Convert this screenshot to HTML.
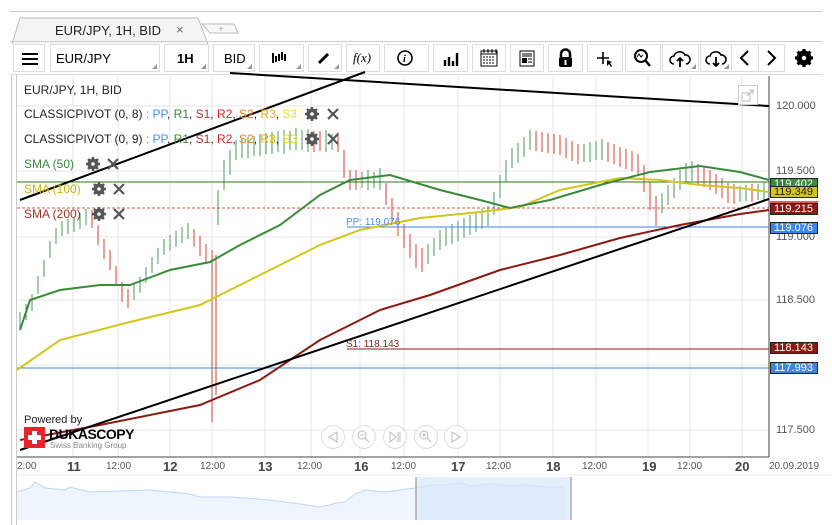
<!DOCTYPE html>
<html><head><meta charset="utf-8">
<style>
*{margin:0;padding:0;box-sizing:border-box}
body{width:832px;height:525px;background:#fff;font-family:"Liberation Sans",Arial,sans-serif;overflow:hidden;position:relative}
.abs{position:absolute}
.btn{position:absolute;top:44px;height:28px;border:1px solid #ddd;background:#fff;font-size:13px;color:#000}
.tri{position:absolute;right:2px;bottom:2px;width:0;height:0;border-left:5px solid transparent;border-bottom:5px solid #999}
.lbl{position:absolute;left:770px;width:48px;height:12px;font-size:11px;line-height:11px;color:#fff;padding-left:3px;border:1px solid #222}
.leg{position:absolute;left:24px;font-size:12px;color:#222}
.pa{position:absolute;left:776px;font-size:11px;color:#555}
.ta{position:absolute;top:461px;font-size:10px;color:#555}
.td{position:absolute;top:459px;font-size:13px;font-weight:bold;color:#444}
</style></head><body>
<div class="abs" style="left:10px;top:11px;width:812px;height:1px;background:#ccc"></div>
<svg class="abs" style="left:10px;top:16px" width="230" height="28">
<path d="M2 28 L10 2 L188 2 L198 28" fill="#f4f4f4" stroke="#bbb"/>
<path d="M192 8 L224 8 L228 17 L200 17 Z" fill="#f8f8f8" stroke="#bbb"/>
<text x="208" y="16" font-size="10" fill="#aaa" font-family="Liberation Sans">+</text>
</svg>
<div class="abs" style="left:55px;top:23px;font-size:13px;color:#222">EUR/JPY, 1H, BID</div>
<div class="abs" style="left:176px;top:22px;font-size:13px;color:#666">×</div>
<div class="abs" style="left:10px;top:41px;width:812px;height:1px;background:#ccc"></div>
<div class="btn" style="left:13px;width:32px"><div style="position:absolute;left:8px;top:8px;width:16px;height:2px;background:#000;box-shadow:0 5px 0 #000,0 10px 0 #000"></div></div>
<div class="btn" style="left:50px;width:110px;padding:6px 5px">EUR/JPY<div class="tri"></div></div>
<div class="btn" style="left:164px;width:45px;padding:6px 12px;font-weight:bold">1H<div class="tri"></div></div>
<div class="btn" style="left:213px;width:42px;padding:6px 10px">BID<div class="tri"></div></div>
<div class="btn" style="left:259px;width:45px"><svg width="40" height="26"><path d="M13 8v10M16 11v6M19 9v7M22 7v8M25 9v7" stroke="#000" stroke-width="2"/></svg><div class="tri"></div></div>
<div class="btn" style="left:308px;width:34px"><svg width="30" height="26"><path d="M10 18 L19 9" stroke="#000" stroke-width="3"/></svg><div class="tri"></div></div>
<div class="btn" style="left:346px;width:34px;font-family:'Liberation Serif';font-style:italic;padding:5px 6px">f(x)</div>
<div class="btn" style="left:384px;width:45px"><svg width="40" height="26"><circle cx="20" cy="13" r="7" fill="none" stroke="#000" stroke-width="1.6"/><text x="18" y="17" font-size="10" font-style="italic" font-weight="bold" font-family="Liberation Serif">i</text></svg></div>
<div class="btn" style="left:433px;width:35px"><svg width="33" height="26"><path d="M11 21v-6M15 21v-9M19 21v-5M23 21v-13" stroke="#000" stroke-width="2.4"/></svg></div>
<div class="btn" style="left:472px;width:34px"><svg width="32" height="26"><rect x="8" y="6" width="16" height="15" fill="none" stroke="#000"/><path d="M8 9h16" stroke="#000"/><path d="M11 4v4M15 4v4M19 4v4M23 4v4" stroke="#000"/><path d="M10 12h12M10 15h12M10 18h12" stroke="#000" stroke-dasharray="2 1"/></svg></div>
<div class="btn" style="left:510px;width:34px"><svg width="32" height="26"><rect x="9" y="6" width="14" height="15" fill="none" stroke="#000"/><path d="M11 9h10M11 11h10" stroke="#000"/><rect x="11" y="13" width="5" height="5"/><path d="M17 14h4M17 17h4" stroke="#000"/></svg></div>
<div class="btn" style="left:548px;width:35px"><svg width="33" height="26"><path d="M12 12v-3a4.5 4.5 0 0 1 9 0v3" fill="none" stroke="#000" stroke-width="2.5"/><rect x="10" y="12" width="13" height="10" rx="2"/><path d="M16.5 15v5" stroke="#fff" stroke-width="2"/></svg></div>
<div class="btn" style="left:587px;width:36px"><svg width="34" height="26"><path d="M15 7v12M9 13h12" stroke="#000" stroke-width="1.6"/><path d="M19 15l5 2-2 1 2 3-1 1-2-3-2 2z"/></svg></div>
<div class="btn" style="left:625px;width:36px"><svg width="34" height="26"><circle cx="15" cy="11" r="6" fill="none" stroke="#000" stroke-width="2"/><path d="M19 15l5 6" stroke="#000" stroke-width="2.4"/><path d="M11 12l2-3 2 3 2-2" fill="none" stroke="#000"/></svg></div>
<div class="btn" style="left:662px;width:37px"><svg width="35" height="26"><path d="M11 19a4 4 0 0 1 0-8a6 6 0 0 1 11-1a4.5 4.5 0 0 1 1 9" fill="none" stroke="#000" stroke-width="1.6"/><path d="M17 22v-8M14 16l3-3 3 3" fill="none" stroke="#000" stroke-width="1.8"/></svg><div class="tri"></div></div>
<div class="btn" style="left:700px;width:32px"><svg width="30" height="26"><path d="M9 19a4 4 0 0 1 0-8a6 6 0 0 1 11-1a4.5 4.5 0 0 1 1 9" fill="none" stroke="#000" stroke-width="1.6"/><path d="M15 12v9M12 18l3 3 3-3" fill="none" stroke="#000" stroke-width="1.8"/></svg><div class="tri"></div></div>
<div class="btn" style="left:731px;width:28px"><svg width="26" height="26"><path d="M16 6l-7 7 7 7" fill="none" stroke="#000" stroke-width="2"/></svg></div>
<div class="btn" style="left:758px;width:27px"><svg width="26" height="26"><path d="M9 6l7 7-7 7" fill="none" stroke="#000" stroke-width="2"/></svg></div>
<svg class="abs" style="left:794px;top:48px" width="20" height="20"><g transform="translate(10,10)"><circle r="5.5" fill="none" stroke="#000" stroke-width="4"/><g stroke="#000" stroke-width="3.2"><path d="M0-9V9M-9 0H9M-6.4-6.4L6.4 6.4M-6.4 6.4L6.4-6.4"/></g><circle r="2.2" fill="#fff"/></g></svg>
<div class="abs" style="left:10px;top:74px;width:812px;height:1px;background:#ddd"></div>
<div class="abs" style="left:11px;top:75px;width:1px;height:450px;background:#ccc"></div>
<div class="abs" style="left:16px;top:75px;width:1px;height:450px;background:#ccc"></div>

<svg class="abs" style="left:0;top:0" width="832" height="525">
<g stroke="#e6e6e6">
<path d="M73 76V457M118 76V457M170 76V457M212 76V457M265 76V457M311 76V457M360 76V457M404 76V457M458 76V457M500 76V457M553 76V457M596 76V457M648 76V457M690 76V457M742 76V457"/>
<path d="M17 106H769M17 171H769M17 237H769M17 300H769M17 365H769M17 430H769"/>
</g>
<line x1="769" y1="76" x2="769" y2="457" stroke="#444"/><line x1="17" y1="457" x2="769" y2="457" stroke="#444"/>
<line x1="17" y1="475" x2="832" y2="475" stroke="#eee"/>
<path stroke="#4a9a5a" fill="none" d="M20 312V328M26 304V320M32 294V311M38 276V294M44 260V277M50 241V258M56 228V244M62 221V236M68 219V234M74 217V232M80 213V229M86 209V225M134 284V300M140 277V293M146 267V283M152 257V273M158 248V264M164 239V255M170 235V251M176 231V247M182 227V243M188 223V239M218 190V225M224 160V190M230 150V175M236 140V160M242 139V158M248 137V158M254 136V156M260 134V156M266 133V154M272 132V154M278 131V152M284 130V154M290 131V150M296 128V150M302 130V150M308 129V152M326 130V152M332 134V150M362 172V188M368 170V190M374 172V188M380 168V190M428 244V264M434 238V256M440 230V250M446 228V246M452 224V244M458 221V241M464 218V238M470 215V235M476 212V232M482 209V229M488 206V226M494 192V215M500 175V198M506 160V182M512 148V168M518 143V163M524 137V157M530 130V150M584 144V162M590 142V162M596 141V160M602 139V160M662 193V213M668 185V205M674 178V198M680 170V190M686 163V183M692 161V181M740 186V202M746 185V201M758 184V200M764 182V200"/>
<path stroke="#d04030" fill="none" d="M92 210V228M98 225V245M104 239V259M110 250V270M116 266V286M122 282V302M128 289V308M194 229V247M200 236V256M206 244V264M212 250V422M216 255V395M314 131V152M320 131V151M338 132V152M344 150V178M350 170V190M356 170V190M386 183V205M392 198V222M398 212V236M404 224V248M410 234V258M416 244V268M422 248V272M536 131V151M542 132V152M548 133V153M554 134V154M560 135V155M566 138V158M572 141V161M578 144V164M608 142V162M614 144V164M620 147V167M626 149V169M632 151V171M638 154V174M644 165V192M650 182V210M656 196V226M698 164V184M704 167V187M710 170V190M716 174V194M722 178V198M728 183V203M734 184V204M752 184V202"/>
<line x1="17" y1="182" x2="769" y2="182" stroke="#2a7a10"/>
<line x1="17" y1="208" x2="769" y2="208" stroke="#e05040" stroke-dasharray="3 2"/>
<line x1="347" y1="227" x2="769" y2="227" stroke="#3b86e6"/>
<line x1="347" y1="349" x2="769" y2="349" stroke="#8b1a10"/>
<line x1="17" y1="368" x2="769" y2="368" stroke="#3b86e6"/>
<polyline fill="none" stroke="#8b1a10" stroke-width="2" points="20,440 100,425 200,405 260,380 320,340 380,310 430,295 500,270 560,255 620,238 680,225 740,214 769,210"/>
<polyline fill="none" stroke="#d4c51e" stroke-width="2" points="17,370 60,340 130,322 200,305 240,285 280,265 320,245 360,230 420,218 480,212 520,207 560,190 620,178 660,180 700,185 740,188 769,192"/>
<polyline fill="none" stroke="#3a8a3a" stroke-width="2" points="20,330 30,300 60,290 100,285 130,285 170,270 210,262 240,245 280,225 320,195 350,180 390,175 440,190 480,200 510,208 550,200 600,185 650,172 700,166 740,172 769,180"/>
<line x1="20" y1="450" x2="769" y2="199" stroke="#000" stroke-width="2"/>
<line x1="20" y1="200" x2="365" y2="72" stroke="#000" stroke-width="2"/>
<line x1="230" y1="73" x2="769" y2="106" stroke="#000" stroke-width="2"/>
<g stroke="#555" stroke-width="2.2" fill="none">
<path d="M328 109l10 10M338 109l-10 10M328 134l10 10M338 134l-10 10M108 159l10 10M118 159l-10 10M114 184l10 10M124 184l-10 10M114 209l10 10M124 209l-10 10"/>
</g>
<g transform="translate(312,114)"><circle r="4" fill="none" stroke="#555" stroke-width="3"/><path d="M0-7V7M-7 0H7M-5-5L5 5M-5 5L5-5" stroke="#555" stroke-width="2.4"/><circle r="1.8" fill="#fff"/></g>
<g transform="translate(312,139)"><circle r="4" fill="none" stroke="#555" stroke-width="3"/><path d="M0-7V7M-7 0H7M-5-5L5 5M-5 5L5-5" stroke="#555" stroke-width="2.4"/><circle r="1.8" fill="#fff"/></g>
<g transform="translate(93,164)"><circle r="4" fill="none" stroke="#555" stroke-width="3"/><path d="M0-7V7M-7 0H7M-5-5L5 5M-5 5L5-5" stroke="#555" stroke-width="2.4"/><circle r="1.8" fill="#fff"/></g>
<g transform="translate(99,189)"><circle r="4" fill="none" stroke="#555" stroke-width="3"/><path d="M0-7V7M-7 0H7M-5-5L5 5M-5 5L5-5" stroke="#555" stroke-width="2.4"/><circle r="1.8" fill="#fff"/></g>
<g transform="translate(99,214)"><circle r="4" fill="none" stroke="#555" stroke-width="3"/><path d="M0-7V7M-7 0H7M-5-5L5 5M-5 5L5-5" stroke="#555" stroke-width="2.4"/><circle r="1.8" fill="#fff"/></g>
<g fill="#fff" fill-opacity="0.7" stroke="#ddd"><circle cx="333" cy="437" r="11.5"/><circle cx="364" cy="437" r="11.5"/><circle cx="395" cy="437" r="11.5"/><circle cx="426" cy="437" r="11.5"/><circle cx="456" cy="437" r="11.5"/></g>
<g fill="none" stroke="#bbb"><path d="M337 432L329 437L337 442Z"/><path d="M452 432L460 437L452 442Z"/><circle cx="362" cy="435" r="4"/><path d="M365 438l4 4M360 435h4"/><circle cx="424" cy="435" r="4"/><path d="M427 438l4 4M422 435h4M424 433v4"/><path d="M390 432L396 437L390 442Z"/><path d="M398 432v10M400 432v10"/></g>
<polygon fill="#eef5fd" points="17,520 17,492 30,488 35,482 45,488 65,490 70,487 90,492 150,490 190,494 200,497 230,497 270,500 300,504 320,507 330,505 335,503 345,502 355,494 365,490 385,492 400,490 415,488 430,485 445,485 460,483 470,486 490,484 510,486 525,485 545,487 565,487 565,520"/>
<polyline fill="none" stroke="#bcd6f6" points="17,492 30,488 35,482 45,488 65,490 70,487 90,492 150,490 190,494 200,497 230,497 270,500 300,504 320,507 330,505 335,503 345,502 355,494 365,490 385,492 400,490 415,488 430,485 445,485 460,483 470,486 490,484 510,486 525,485 545,487 565,487"/>
<rect x="416" y="477" width="155" height="43" fill="#d8e8fb" fill-opacity="0.7"/>
<line x1="416" y1="477" x2="416" y2="520" stroke="#aaa" stroke-width="1.5"/><line x1="571" y1="477" x2="571" y2="520" stroke="#aaa" stroke-width="1.5"/>
</svg>

<div class="leg" style="top:83px">EUR/JPY, 1H, BID</div>
<div class="leg" style="top:107px">CLASSICPIVOT (0, 8) <span style="color:#888">:</span> <span style="color:#4a90e2">PP</span>, <span style="color:#3a8a3a">R1</span>, <span style="color:#b03030">S1</span>, <span style="color:#e02020">R2</span>, <span style="color:#f08020">S2</span>, <span style="color:#f0b000">R3</span>, <span style="color:#f0e000">S3</span></div>
<div class="leg" style="top:132px">CLASSICPIVOT (0, 9) <span style="color:#888">:</span> <span style="color:#4a90e2">PP</span>, <span style="color:#3a8a3a">R1</span>, <span style="color:#b03030">S1</span>, <span style="color:#e02020">R2</span>, <span style="color:#f08020">S2</span>, <span style="color:#f0b000">R3</span>, <span style="color:#f0e000">S3</span></div>
<div class="leg" style="top:157px;color:#3a8a3a">SMA (50)</div>
<div class="leg" style="top:182px;color:#c8b800">SMA (100)</div>
<div class="leg" style="top:207px;color:#a03020">SMA (200)</div>
<div class="abs" style="left:346px;top:217px;font-size:10px;color:#4a90e2">PP: 119.076</div>
<div class="abs" style="left:346px;top:339px;font-size:10px;color:#8b1a10">S1: 118.143</div>

<div class="pa" style="top:100px">120.000</div>
<div class="pa" style="top:165px">119.500</div>
<div class="pa" style="top:231px">119.000</div>
<div class="pa" style="top:294px">118.500</div>
<div class="pa" style="top:424px">117.500</div>
<div class="lbl" style="top:178px;background:#3a8a3a;height:9px;overflow:hidden">119.402</div>
<div class="lbl" style="top:186px;background:#d4c51e;color:#222">119.349</div>
<div class="lbl" style="top:201px;background:#e06050;height:3px;border:none"></div>
<div class="lbl" style="top:203px;background:#8b1a10">119.215</div>
<div class="lbl" style="top:222px;background:#3b86e6">119.076</div>
<div class="lbl" style="top:342px;background:#8b1a10">118.143</div>
<div class="lbl" style="top:362px;background:#3b86e6">117.993</div>

<div class="ta" style="left:17px">2:00</div>
<div class="td" style="left:67px">11</div>
<div class="ta" style="left:106px">12:00</div>
<div class="td" style="left:163px">12</div>
<div class="ta" style="left:200px">12:00</div>
<div class="td" style="left:258px">13</div>
<div class="ta" style="left:297px">12:00</div>
<div class="td" style="left:354px">16</div>
<div class="ta" style="left:391px">12:00</div>
<div class="td" style="left:451px">17</div>
<div class="ta" style="left:486px">12:00</div>
<div class="td" style="left:546px">18</div>
<div class="ta" style="left:582px">12:00</div>
<div class="td" style="left:642px">19</div>
<div class="ta" style="left:677px">12:00</div>
<div class="td" style="left:735px">20</div>
<div class="ta" style="left:769px">20.09.2019</div>

<div class="abs" style="left:24px;top:414px;font-size:11px;color:#222">Powered by</div>
<div class="abs" style="left:24px;top:427px;width:21px;height:21px;background:#e8232b"><div style="position:absolute;left:8px;top:4px;width:5px;height:13px;background:#fff"></div><div style="position:absolute;left:4px;top:8px;width:13px;height:5px;background:#fff"></div></div>
<div class="abs" style="left:49px;top:426px;font-size:14px;font-weight:bold;letter-spacing:-0.5px;color:#000">DUKASCOPY</div>
<div class="abs" style="left:50px;top:441px;font-size:8px;color:#888">Swiss Banking Group</div>

<svg class="abs" style="left:738px;top:85px" width="20" height="20"><rect x="0.5" y="0.5" width="19" height="19" fill="#fff" stroke="#ccc"/><rect x="4" y="8" width="8" height="8" fill="none" stroke="#bbb"/><path d="M9 11L15 5M11 5h4v4" fill="none" stroke="#bbb"/></svg>
</body></html>
